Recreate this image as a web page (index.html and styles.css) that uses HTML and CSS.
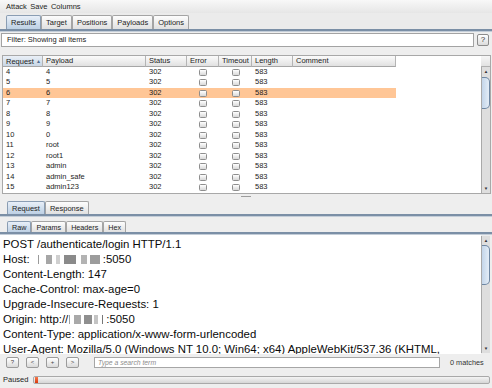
FILE: index.html
```html
<!DOCTYPE html>
<html>
<head>
<meta charset="utf-8">
<link rel="stylesheet" href="styles.css">
</head>
<body>
<div class="app">
  <div class="menubar"><span>Attack</span><span>Save</span><span>Columns</span></div>

  <div class="tabstrip main-tabs">
    <div class="tab active">Results</div><div class="tab">Target</div><div class="tab">Positions</div><div class="tab">Payloads</div><div class="tab">Options</div>
  </div>

  <div class="filter-row">
    <div class="filter">Filter: Showing all items</div>
    <div class="help-btn">?</div>
  </div>

  <div class="table-pane">
    <div class="viewport">
      <div class="thead">
        <div class="th sorted">Request <span class="sort">▲</span></div>
        <div class="th">Payload</div>
        <div class="th">Status</div>
        <div class="th">Error</div>
        <div class="th">Timeout</div>
        <div class="th">Length</div>
        <div class="th">Comment</div>
      </div>
      <div class="tbody">
        <div class="tr"><div class="td">4</div><div class="td">4</div><div class="td">302</div><div class="td chk"><span class="cb"></span></div><div class="td chk"><span class="cb"></span></div><div class="td">583</div><div class="td"></div></div>
        <div class="tr"><div class="td">5</div><div class="td">5</div><div class="td">302</div><div class="td chk"><span class="cb"></span></div><div class="td chk"><span class="cb"></span></div><div class="td">583</div><div class="td"></div></div>
        <div class="tr sel"><div class="td">6</div><div class="td">6</div><div class="td">302</div><div class="td chk"><span class="cb"></span></div><div class="td chk"><span class="cb"></span></div><div class="td">583</div><div class="td"></div></div>
        <div class="tr"><div class="td">7</div><div class="td">7</div><div class="td">302</div><div class="td chk"><span class="cb"></span></div><div class="td chk"><span class="cb"></span></div><div class="td">583</div><div class="td"></div></div>
        <div class="tr"><div class="td">8</div><div class="td">8</div><div class="td">302</div><div class="td chk"><span class="cb"></span></div><div class="td chk"><span class="cb"></span></div><div class="td">583</div><div class="td"></div></div>
        <div class="tr"><div class="td">9</div><div class="td">9</div><div class="td">302</div><div class="td chk"><span class="cb"></span></div><div class="td chk"><span class="cb"></span></div><div class="td">583</div><div class="td"></div></div>
        <div class="tr"><div class="td">10</div><div class="td">0</div><div class="td">302</div><div class="td chk"><span class="cb"></span></div><div class="td chk"><span class="cb"></span></div><div class="td">583</div><div class="td"></div></div>
        <div class="tr"><div class="td">11</div><div class="td">root</div><div class="td">302</div><div class="td chk"><span class="cb"></span></div><div class="td chk"><span class="cb"></span></div><div class="td">583</div><div class="td"></div></div>
        <div class="tr"><div class="td">12</div><div class="td">root1</div><div class="td">302</div><div class="td chk"><span class="cb"></span></div><div class="td chk"><span class="cb"></span></div><div class="td">583</div><div class="td"></div></div>
        <div class="tr"><div class="td">13</div><div class="td">admin</div><div class="td">302</div><div class="td chk"><span class="cb"></span></div><div class="td chk"><span class="cb"></span></div><div class="td">583</div><div class="td"></div></div>
        <div class="tr"><div class="td">14</div><div class="td">admin_safe</div><div class="td">302</div><div class="td chk"><span class="cb"></span></div><div class="td chk"><span class="cb"></span></div><div class="td">583</div><div class="td"></div></div>
        <div class="tr"><div class="td">15</div><div class="td">admin123</div><div class="td">302</div><div class="td chk"><span class="cb"></span></div><div class="td chk"><span class="cb"></span></div><div class="td">583</div><div class="td"></div></div>
      </div>
    </div>
    <div class="sb-col">
      <div class="sb-corner"></div>
      <div class="vsb table-sb">
        <div class="sb-arrow">▲</div>
        <div class="sb-track"><div class="sb-thumb"></div></div>
        <div class="sb-arrow">▼</div>
      </div>
    </div>
  </div>

  <div class="splitter"><span class="grip"></span></div>

  <div class="tabstrip req-tabs">
    <div class="tab active">Request</div><div class="tab">Response</div>
  </div>

  <div class="tabstrip raw-tabs">
    <div class="tab active">Raw</div><div class="tab">Params</div><div class="tab">Headers</div><div class="tab">Hex</div>
  </div>

  <div class="editor">
    <div class="editor-text">
      <div class="ln">POST /authenticate/login HTTP/1.1</div>
      <div class="ln">Host: <span class="redact host-ip"></span>:5050</div>
      <div class="ln">Content-Length: 147</div>
      <div class="ln">Cache-Control: max-age=0</div>
      <div class="ln">Upgrade-Insecure-Requests: 1</div>
      <div class="ln">Origin: http://<span class="redact origin-ip"></span>:5050</div>
      <div class="ln">Content-Type: application/x-www-form-urlencoded</div>
      <div class="ln">User-Agent: Mozilla/5.0 (Windows NT 10.0; Win64; x64) AppleWebKit/537.36 (KHTML,</div>
    </div>
    <div class="vsb editor-sb">
      <div class="sb-arrow">▲</div>
      <div class="sb-track"><div class="sb-thumb"></div></div>
      <div class="sb-arrow">▼</div>
    </div>
  </div>

  <div class="searchbar">
    <div class="btn">?</div><div class="btn">&lt;</div><div class="btn">+</div><div class="btn">&gt;</div>
    <div class="search">Type a search term</div>
    <div class="matches">0 matches</div>
  </div>

  <div class="statusbar">
    <span class="status-label">Paused</span>
    <div class="progress"><span class="progress-mark"></span></div>
  </div>
</div>
</body>
</html>
```

FILE: styles.css
```css
* { box-sizing: border-box; }
html, body { margin: 0; padding: 0; }
body {
  width: 492px;
  height: 388px;
  overflow: hidden;
  background: #eeeeee;
  font-family: "Liberation Sans", Arial, sans-serif;
  font-size: 7.5px;
  color: #1c1c1c;
}
.app { display: flex; flex-direction: column; height: 388px; }

/* menu */
.menubar {
  height: 13px;
  display: flex;
  align-items: center;
  gap: 3.5px;
  padding-left: 6px;
  background: linear-gradient(#f8f8f8, #e6e6e6);
}

/* tabs */
.tabstrip {
  display: flex;
  align-items: flex-end;
  border-bottom: 2px solid #7b8fa6;
  box-shadow: 0 1px 0 #c3cdd8;
}
.tab {
  padding: 0 4px;
  border: 1px solid #a4a4a4;
  border-bottom: none;
  border-radius: 2px 2px 0 0;
  background: linear-gradient(#fdfdfd, #e0e0e0);
  white-space: nowrap;
}
.tab.active {
  border-color: #8a9db3;
  background: linear-gradient(#e8eff8, #bdd0e4);
}
.main-tabs { height: 18px; padding-left: 6px; background: #ebebeb; }
.main-tabs .tab { height: 14px; line-height: 13px; }
.req-tabs { height: 16px; padding-left: 7px; }
.req-tabs .tab { height: 13px; line-height: 13px; }
.raw-tabs { height: 14px; margin-top: 4px; padding-left: 7px; }
.raw-tabs .tab { height: 11px; line-height: 11px; font-size: 7.2px; }

/* filter */
.filter-row {
  display: flex;
  gap: 3px;
  height: 14px;
  margin-top: 2px;
  padding: 0 3px 0 1px;
}
.filter {
  flex: 1;
  background: #ffffff;
  border: 1px solid #a3a3a3;
  padding-left: 5px;
  line-height: 12px;
}
.help-btn {
  width: 12px;
  height: 12px;
  margin-top: 1px;
  border: 1px solid #8c8c8c;
  border-radius: 2px;
  background: linear-gradient(#ffffff, #dcdcdc);
  font-size: 8px;
  line-height: 10px;
  text-align: center;
  color: #333;
}

/* table */
.table-pane {
  display: flex;
  height: 140px;
  margin: 8px 1px 0 2px;
  border: 1px solid #a8a8a8;
  background: #ffffff;
}
.viewport { flex: 1; display: flex; flex-direction: column; overflow: hidden; background: #ffffff; }
.thead, .tr {
  display: grid;
  grid-template-columns: 40px 103px 41px 32px 33px 41px 103px;
  width: 393px;
}
.thead { height: 11px; }
.th {
  padding-left: 3px;
  line-height: 10px;
  border-right: 1px solid #b4b4b4;
  border-bottom: 1px solid #a6a6a6;
  background: linear-gradient(#fbfbfb, #e1e1e1);
  white-space: nowrap;
  overflow: hidden;
}
.th.sorted { background: linear-gradient(#eaf0f7, #c8d6e5); }
.sort { font-size: 5px; color: #4f6e92; vertical-align: 1px; }
.tr { height: 10.5px; line-height: 10.5px; }
.td { padding-left: 3px; white-space: nowrap; overflow: hidden; }
.tr.sel .td { background: #ffc696; }
.td.chk { padding-left: 0; display: flex; align-items: center; justify-content: center; }
.cb {
  width: 8px;
  height: 7px;
  border: 1px solid #8e8e8e;
  border-radius: 1.5px;
  background: linear-gradient(#ffffff, #d8d8d8);
}

/* scrollbars */
.sb-col { width: 9px; display: flex; flex-direction: column; }
.sb-corner { height: 11px; background: linear-gradient(#f6f6f6, #e2e2e2); border-bottom: 1px solid #b0b0b0; }
.vsb {
  width: 9px;
  display: flex;
  flex-direction: column;
  background: #dedede;
  border-left: 1px solid #a9a9a9;
}
.table-sb { flex: 1; }
.sb-arrow {
  height: 9px;
  font-size: 4.5px;
  line-height: 9px;
  text-align: center;
  color: #333;
}
.sb-track { flex: 1; }
.sb-thumb {
  height: 32px;
  margin-top: 1px;
  border: 1px solid #6e87a3;
  border-left: none;
  border-radius: 0 5px 5px 0;
  background: linear-gradient(to right, #c3d5e9, #e4edf7);
}

.splitter { height: 6px; display: flex; justify-content: center; padding-top: 2px; }
.grip { width: 10px; height: 1px; background: #9d9d9d; }

/* editor */
.editor {
  display: flex;
  height: 119px;
  margin-top: 1px;
  padding-right: 2px;
  background: #eeeeee;
}
.editor-text {
  flex: 1;
  min-width: 0;
  background: #ffffff;
  padding: 1.5px 0 0 3px;
  font-size: 11.4px;
  line-height: 15px;
  color: #0a0a0a;
  overflow: hidden;
}
.ln { white-space: pre; }
.editor-sb { margin: 1px 0; }
.editor-sb .sb-thumb { height: 40px; margin-top: 0; }
.redact {
  display: inline-block;
  height: 9px;
  vertical-align: -1px;
  filter: blur(0.7px);
}
.host-ip {
  width: 70px;
  background: linear-gradient(to right,
    transparent 0 5px, #9a9a9a 5px 6px, transparent 6px 13px,
    #a6a6a6 13px 19px, transparent 19px 23px, #cfcfcf 23px 27px,
    transparent 27px 31px, #8a8a8a 31px 43px, transparent 43px 48px,
    #b3b3b3 48px 54px, transparent 54px 57px, #9c9c9c 57px 67px, transparent 67px);
}
.origin-ip {
  width: 38px;
  background: linear-gradient(to right,
    transparent 0 1px, #a0a0a0 1px 2px, transparent 2px 6px,
    #a9a9a9 6px 13px, transparent 13px 16px, #8f8f8f 16px 24px,
    transparent 24px 26px, #c4c4c4 26px 30px, transparent 30px 34px,
    #777777 34px 35px, transparent 35px);
}

/* search bar */
.searchbar {
  display: flex;
  align-items: center;
  height: 17px;
  padding-left: 6px;
}
.btn {
  width: 13px;
  height: 11px;
  margin-right: 7px;
  border: 1px solid #9b9b9b;
  border-radius: 2px;
  background: linear-gradient(#ffffff, #dadada);
  font-size: 6px;
  line-height: 9px;
  text-align: center;
  color: #444;
}
.search {
  width: 346px;
  height: 11px;
  margin-left: 8px;
  border: 1px solid #a6a6a6;
  background: #ffffff;
  padding-left: 3px;
  font-size: 6.8px;
  font-style: italic;
  line-height: 9px;
  color: #8c8c8c;
}
.matches { margin-left: 10px; font-size: 7.3px; color: #333; }

/* status bar */
.statusbar {
  display: flex;
  align-items: center;
  height: 17px;
  padding: 0 2px 0 3px;
}
.status-label { width: 30px; flex: none; }
.progress {
  flex: 1;
  height: 8px;
  border: 1px solid #a9a9a9;
  border-radius: 2px;
  background: linear-gradient(#f4f4f4, #d6d6d6);
  padding-left: 1px;
}
.progress-mark {
  display: block;
  width: 3px;
  height: 6px;
  background: linear-gradient(#f7794b, #d9390e);
}
```
